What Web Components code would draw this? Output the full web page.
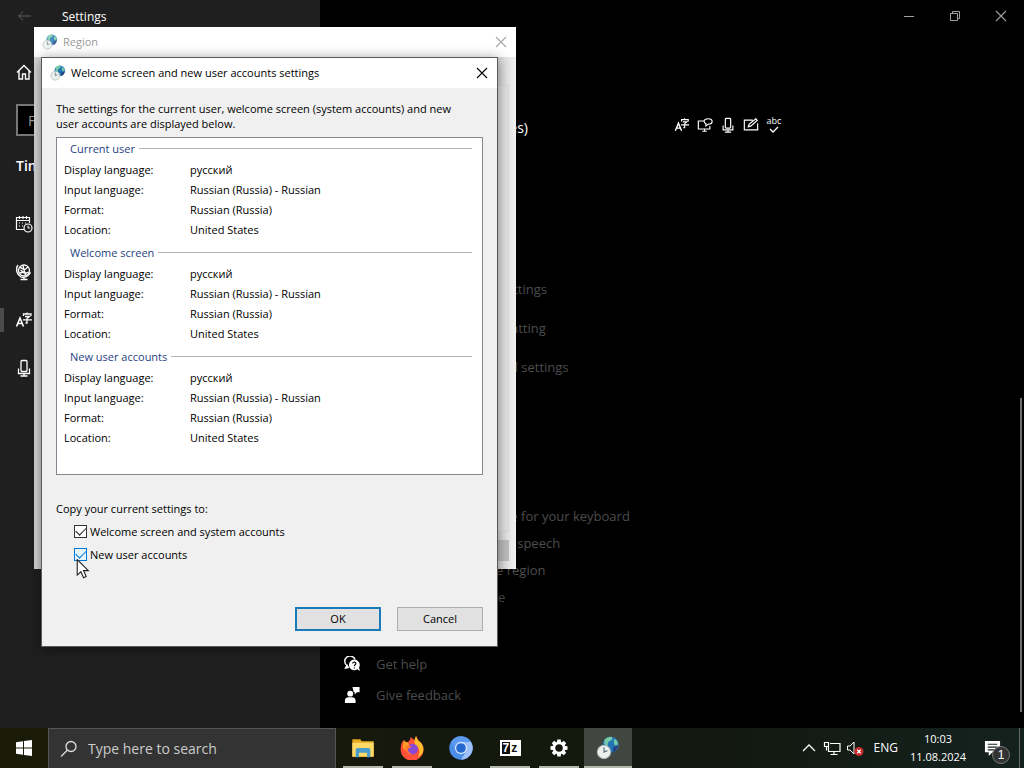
<!DOCTYPE html>
<html lang="en">
<head>
<meta charset="utf-8">
<title>Settings</title>
<style>
html, body { margin: 0; height: 100%; background: #000; overflow: hidden; }
body { font-family: "Open Sans", "Noto Sans", sans-serif; }
</style>
</head>
<body>
<desk-top></desk-top>
<script>
const define = (name, html) => {
  const t = document.createElement('template');
  t.innerHTML = '<style>*{box-sizing:border-box}svg{display:block}</style>' + html;
  customElements.define(name, class extends HTMLElement {
    constructor() {
      super();
      this.attachShadow({ mode: 'open' }).append(t.content.cloneNode(true));
    }
  });
};

const ICONS = {
  back: '<path d="M17 9H3M8 4 3 9l5 5"/>',
  home: '<path d="M2 9.500 9 2.500l7 7M4 8v8h3.500v-5h3v5H14V8" stroke-width="1.400"/>',
  date: '<path d="M9 14.500H1.500v-12h13V8M1.500 5.500h13M4.500 1v3M8 1v3M11.500 1v3M4 8h1M7 8h1M10 8h1M4 11h1M7 11h1" stroke-width="1.200"/><circle cx="13" cy="13" r="4" stroke-width="1.200"/><path d="M13 10.500V13h2"/>',
  region: '<g stroke-width="1.300"><circle cx="9" cy="7.500" r="5.500"/><path d="M4.500 4.500c3 0 3 2 5 2s2-3 4-2M4.500 10.500c2-3 5 1.500 9-1.500M8 2.500l2.500 10M5.500 7l6 4M3 2C0 6 2 12 6 13.800c4 1.500 8-.8 9.500-4.500M9 14v2.500M5.500 16.500h7"/></g>',
  language: '<path d="M1.500 15.500 5 7l3.500 8.500M2.800 12.500h4.400" stroke-width="1.600"/><path d="M12 1.500v1.500M8.500 5V3h7.500v2M10 5.500h4.500L12 7.500V12h-1.500M8 8.800h9" stroke-width="1.300"/>',
  mic: '<g stroke-width="1.300"><rect x="6" y="1.500" width="6" height="11" rx="1"/><path d="M3.500 9.500V14.500h11V9.500M9 14.500V17M5.500 17h7"/></g>',
  display: '<g stroke-width="1.300"><path d="M8 4.500H1.500v9h13V10M6 16h5M8.500 13.500V16"/><path d="M8 4.800C8 3 10 2 12.500 2S17 3 17 5s-2 3-4 3l-3 2V7.500C8.500 7 8 6 8 4.800Z"/></g>',
  pen: '<path d="M11 3.500H1.500v11h15V7M6 11l1-3 7.500-6 1.500 1.800L9 10Z" stroke-width="1.300"/>',
  help: '<path d="M3.500 11A6 6 0 1 1 12.500 4" stroke-width="1.600"/><path d="M3.500 9.500 1 14l5-1" fill="currentColor"/><path d="M11.500 4a6 6 0 1 0 3.400 11l3 2-1-4A6 6 0 0 0 11.500 4Z" fill="currentColor" stroke="none"/><path d="M9.800 8.500c0-2.500 3.800-2 3.500.2-.2 1.300-1.700 1.200-1.700 2.800M11.600 13v1" stroke="#000" stroke-width="1.300"/>',
  feedback: '<circle cx="7" cy="7.500" r="3.300" fill="currentColor" stroke="none"/><path d="M1 18v-2.500Q1 11.500 5 11.500h4q4 0 4 4V18ZM9.500 0h8v6h-3l-2.500 2.300V6H11Z" fill="currentColor" stroke="none"/>',
  close: '<path d="m4 4 10 10M14 4 4 14" stroke-width="1.100"/>',
  min: '<path d="M4 9.500h10"/>',
  restore: '<path d="M4.500 6.500h7v7h-7zM6.500 6.500v-2h7v7h-2"/>',
  search: '<circle cx="11" cy="6.500" r="5" stroke-width="1.300"/><path d="m7.500 10-6.500 6.500" stroke-width="1.300"/>',
  chevron: '<path d="m3 12 6-6 6 6" stroke-width="1.300"/>',
  network: '<path d="M7 4.500h10v8H5.500V8M11 12.500v3M7.500 15.500h7M1.500 3.500h4v4h-4zM3.500 7.500v4" stroke-width="1.200"/>',
  sound: '<path d="M1.500 7h2.500l4-4v12l-4-4H1.500Z"/><circle cx="13" cy="12.500" r="4.500" fill="#c42b2b" stroke="none"/><path d="m11.300 10.800 3.400 3.400m0-3.400-3.400 3.400" stroke-width="1.300"/>',
  start: '<path fill="currentColor" stroke="none" d="M1 3.200 8 2.200V8.500H1ZM9 2.100 17 1v7.500H9ZM1 9.500h7v6.300l-7-1ZM9 9.500h8V17l-8-1.100Z"/>',
  globe: '<circle cx="11" cy="6.500" r="6" fill="#2376b5" stroke="none"/><path d="M6.500 2.500Q9 0 12 .800q1 2-1.500 3T9 8Q5 7 6.500 2.500M14 2q3 2 2.700 5.500Q14 8 13.500 5.500T14 2" fill="#75c9a8" stroke="none"/><path d="M13 8.500q3-1 3.500-3 0 5-4 7Z" fill="#233f82" stroke="none"/><circle cx="6" cy="12" r="5" fill="#edf1ed" stroke="#a9b5b5" stroke-width=".8"/><path d="M6 8.500V12l2.500-1" stroke="#5c7280" stroke-width=".9"/>',
  files: '<path d="M1 2.500h6l1 1.500h9v11.500H1Z" fill="#e9a91d" stroke="none"/><path d="M1 5h16v10.500H1Z" fill="#ffd968" stroke="none"/><path d="M3.500 16V10.500Q3.500 9 5 9h8q1.500 0 1.500 1.500V16H12v-3.500H6V16Z" fill="#4a9ccc" stroke="none"/>',
  firefox: '<path d="M3 3Q3.800 5 5.500 4.500 7.500 4 8 1q2 1 3 2.500L12 0q1 3 3 4.500Q18 7 17.500 11A8.500 8 0 0 1 .5 10Q.5 5 3 3Z" fill="#ff503a" stroke="none"/><path d="M12 0q1 3 3 4.500Q18 7 17.500 11c-.5 3-3 4-4 5 2-4 1-8-2-9Q10 4 12 0Z" fill="#ffbd2e" stroke="none"/><path d="M3 3Q3.500 5 5.500 4.500L7 7q-3 1-3 4Q1 9 3 3Z" fill="#ff9c28" stroke="none"/><circle cx="9.500" cy="9.800" r="4" fill="#8b49d6" stroke="none"/><path d="M4 8q3-2 5 .5-3 0-3 2 0 2 3 3-5 1-5-5.500" fill="#ff7a2a" stroke="none"/>',
  chromium: '<circle cx="9" cy="9" r="8.800" fill="#4b8ee8" stroke="none"/><path d="M9 4.500h7.500A8.800 8.800 0 0 1 9 17.800l4-6.500Z" fill="#9dc1f8" stroke="none"/><path d="M1.500 4.400A8.800 8.800 0 0 1 16.500 4.500H9a4.500 4.500 0 0 0-4.200 6Z" fill="#5a9af0" stroke="none"/><circle cx="9" cy="9" r="4.600" fill="#d6e6ff" stroke="none"/><circle cx="9" cy="9" r="3.600" fill="#2469cf" stroke="none"/>',
  gear: '<g stroke="none" fill="currentColor"><path d="M7.300.5h3.400l.5 3.500H6.800ZM6.800 14h4.400l-.5 3.500H7.300Z"/><path transform="rotate(45 9 9)" d="M7.300.5h3.400l.5 3.500H6.800ZM6.800 14h4.400l-.5 3.500H7.300Z"/><path transform="rotate(90 9 9)" d="M7.300.5h3.400l.5 3.500H6.800ZM6.800 14h4.400l-.5 3.500H7.300Z"/><path transform="rotate(135 9 9)" d="M7.300.5h3.400l.5 3.500H6.800ZM6.800 14h4.400l-.5 3.500H7.300Z"/></g><circle cx="9" cy="9" r="5" stroke-width="2.400"/>',
  note: '<path d="M1 1h16v12H9l-4 4v-4H1Z" fill="currentColor" stroke="none"/><path d="M4 4.500h10M4 7.500h10M4 10.500h7" stroke="#16201f" stroke-width="1.200"/>',
  cursor: '<path d="M2 .500v14l3.300-3 2.400 5.300 2.400-1.100-2.400-5.200H12Z" fill="#fff" stroke="#222"/>'
};

customElements.define('ui-icon', class extends HTMLElement {
  constructor() {
    super();
    this.attachShadow({ mode: 'open' });
  }
  connectedCallback() {
    this.shadowRoot.innerHTML = `<style>:host{display:block;flex:none;width:var(--size,18px);height:var(--size,18px)}svg{display:block;width:100%;height:100%}</style>
      <svg viewBox="0 0 18 18" fill="none" stroke="currentColor" aria-hidden="true">${ICONS[this.getAttribute('name')]}</svg>`;
  }
});

define('nav-rail', `
<style>
:host { display: block; background: #1f1f1f; color: #fff; padding-top: 32px; }
a { display: flex; align-items: center; height: 48px; padding-left: 15px; color: #fff; }
a.current { position: relative; }
a.current::before { content: ""; position: absolute; left: 0; top: 12px; width: 4px; height: 24px; background: #4c4c4c; }
.home { height: 40px; margin-top: 20px; }
.find { display: block; width: calc(100% - 32px); height: 32px; margin: 12px 16px 0; padding: 0 10px; background: #000; border: 2px solid #777; color: #aaa; font: 14px "Open Sans", sans-serif; }
.find::placeholder { color: #999; opacity: 1; }
h2 { margin: 20px 16px 24px; font-size: 14px; line-height: 20px; font-weight: 600; }
</style>
<a class="home" href="#home" aria-label="Home"><ui-icon name="home"></ui-icon></a>
<input class="find" type="text" placeholder="Find" aria-label="Find a setting">
<h2>Time</h2>
<nav>
<a href="#date" aria-label="Date and time"><ui-icon name="date"></ui-icon></a>
<a href="#region" aria-label="Region"><ui-icon name="region"></ui-icon></a>
<a class="current" href="#language" aria-label="Language"><ui-icon name="language"></ui-icon></a>
<a href="#speech" aria-label="Speech"><ui-icon name="mic"></ui-icon></a>
</nav>`);

define('language-page', `
<style>
:host { display: block; padding: 108px 24px 0; color: #fff; }
.lang { display: flex; align-items: center; gap: 146px; height: 40px; padding-left: 32px; }
.lang span { width: 152px; text-align: right; font-size: 14px; line-height: 20px; }
.feat { display: flex; gap: 7px; --size: 16px; margin-bottom: 6px; }
.abc { width: 16px; font-size: 9px; line-height: 8px; display: grid; justify-items: center; }
.abc svg { width: 10px; height: 7px; }
a { display: block; width: max-content; color: #4c4c4c; text-decoration: none; font-size: 13px; line-height: 20px; }
.related { display: grid; gap: 19px; margin-top: 131px; padding-left: 6px; }
.web { display: grid; gap: 7px; margin-top: 129px; }
.foot { display: grid; gap: 11px; margin-top: 47px; }
.foot a { display: flex; align-items: center; gap: 16px; }
.foot ui-icon { --size: 16px; color: #fff; }
.bar { position: absolute; right: 2px; top: 398px; bottom: 16px; width: 2px; background: #6f6f6f; }
</style>
<div class="lang"><span>States)</span>
<div class="feat"><ui-icon name="language"></ui-icon><ui-icon name="display"></ui-icon><ui-icon name="mic"></ui-icon><ui-icon name="pen"></ui-icon>
<div class="abc">abc<svg viewBox="0 0 10 7" fill="none" stroke="currentColor" stroke-width="1.300"><path d="m1 3 3 3 5-5"/></svg></div></div></div>
<div class="related">
<a href="#admin">Administrative language settings</a>
<a href="#format">Date, time &amp; regional formatting</a>
<a href="#typing">Spelling, typing, &amp; keyboard settings</a>
</div>
<div class="web">
<a href="#w1">Changing the input language for your keyboard</a>
<a href="#w2">Downloading a language for speech</a>
<a href="#w3">Changing language for the region</a>
<a href="#w4">Adding an offline language</a>
</div>
<div class="foot">
<a href="#help"><ui-icon name="help"></ui-icon>Get help</a>
<a href="#feedback"><ui-icon name="feedback"></ui-icon>Give feedback</a>
</div>
<div class="bar"></div>`);

define('settings-window', `
<style>
:host { display: grid; grid-template-columns: 320px 1fr; position: relative; min-height: 0; overflow: hidden; }
header { position: absolute; inset: 0 0 auto 0; display: flex; align-items: center; height: 32px; color: #fff; font-size: 12px; }
button { display: grid; place-items: center; height: 32px; padding: 0; border: 0; background: none; color: #a0a0a0; --size: 18px; }
.back { width: 48px; color: #666; --size: 16px; }
h1 { flex: 1; margin: 0 0 0 14px; padding-top: 2px; font-size: 12px; font-weight: 400; line-height: 18px; }
.ctl { width: 46px; }
</style>
<nav-rail></nav-rail>
<language-page></language-page>
<header>
<button class="back" aria-label="Back"><ui-icon name="back"></ui-icon></button>
<h1>Settings</h1>
<button class="ctl" aria-label="Minimize"><ui-icon name="min"></ui-icon></button>
<button class="ctl" aria-label="Restore"><ui-icon name="restore"></ui-icon></button>
<button class="ctl" aria-label="Close"><ui-icon name="close"></ui-icon></button>
</header>`);

define('dialog-window', `
<style>
:host { display: flex; flex-direction: column; background: #f0f0f0; color: #000; font-size: 11px; line-height: 15px; }
header { display: flex; align-items: center; flex: none; height: 30px; padding-left: 8px; background: #fff; color: var(--title, #000); --size: 16px; }
header ui-icon { opacity: var(--dim, 1); }
h1 { flex: 1; margin: 0 0 0 5px; font-size: 11px; line-height: 16px; font-weight: 400; }
button { display: grid; place-items: center; width: 30px; height: 30px; padding: 0; border: 0; background: none; color: inherit; --size: 18px; }
</style>
<header><ui-icon name="globe"></ui-icon><h1><slot name="title"></slot></h1>
<button aria-label="Close"><ui-icon name="close"></ui-icon></button></header>
<slot></slot>`);

define('settings-group', `
<style>
:host { display: block; }
h2 { display: flex; align-items: center; gap: 4px; height: 21px; margin: 0; padding: 0 3px 0 6px; color: #1f3f82; font-size: 11px; font-weight: 400; }
h2::after { content: ""; flex: 1; height: 1px; background: #b4b4b4; }
dl { display: grid; grid-template-columns: 126px 1fr; grid-auto-rows: 20px; align-items: center; margin: 0; }
dt, dd { margin: 0; }
</style>
<h2><slot></slot></h2>
<dl><dt>Display language:</dt><dd>русский</dd>
<dt>Input language:</dt><dd>Russian (Russia) - Russian</dd>
<dt>Format:</dt><dd>Russian (Russia)</dd>
<dt>Location:</dt><dd>United States</dd></dl>`);

define('welcome-settings', `
<style>
:host { display: flex; flex-direction: column; flex: 1; padding: 13px 14px 15px; }
p { margin: 0; padding-right: 16px; }
.box { display: flex; flex-direction: column; gap: 3px; height: 338px; margin-top: 6px; padding: 0 7px; background: #fff; border: 1px solid #828790; }
.copy { margin-top: 26px; }
label { display: flex; align-items: center; gap: 3px; height: 23px; padding-left: 18px; }
.first { margin-top: 4px; }
input { appearance: none; display: grid; place-items: center; width: 13px; height: 13px; margin: 0; background: #fff; border: 1px solid #333; color: #222; }
input::before { content: ""; width: 9px; height: 5px; border: solid currentColor; border-width: 0 0 1px 1px; transform: translateY(-2px) rotate(-45deg); }
input.hot { border-color: #0078d7; color: #0078d7; background: #e8f4fd; }
footer { display: flex; justify-content: flex-end; gap: 16px; margin-top: auto; }
button { width: 86px; height: 24px; padding: 0 0 2px; border: 1px solid #adadad; background: #e1e1e1; color: #000; font: 11px "Open Sans", sans-serif; }
.ok { border: 2px solid #1979b9; }
</style>
<p>The settings for the current user, welcome screen (system accounts) and new user accounts are displayed below.</p>
<div class="box">
<settings-group>Current user</settings-group>
<settings-group>Welcome screen</settings-group>
<settings-group>New user accounts</settings-group>
</div>
<p class="copy">Copy your current settings to:</p>
<label class="first"><input type="checkbox" checked>Welcome screen and system accounts</label>
<label><input class="hot" type="checkbox" checked>New user accounts</label>
<footer><button class="ok">OK</button><button>Cancel</button></footer>`);

define('region-body', `
<style>
:host { display: flex; flex-direction: column; flex: 1; padding: 28px 7px 8px; background: linear-gradient(90deg, #d6d6d6 96%, #f0f0f0); }
.sheet { flex: 1; border: 1px solid #d9d9d9; background: #e2e2e2; }
.apply { width: 75px; height: 21px; margin: 8px 0 0 auto; background: #bdbdbd; }
</style>
<div class="sheet"></div><div class="apply"></div>`);

define('task-bar', `
<style>
:host { display: flex; height: 40px; color: #fff; background: linear-gradient(90deg, #1a1b08, #15180c 40%, #12180f 70%, #14221f); }
button { position: relative; display: grid; place-items: center; flex: none; width: 48px; height: 40px; padding: 0; border: 0; background: none; color: #fff; --size: 24px; }
.start { --size: 18px; }
.search { display: flex; align-items: center; gap: 10px; flex: 0 1 288px; padding-left: 11px; background: #333; border: 1px solid #555; border-bottom: 0; color: #ddd; margin-right: 3px; }
.search input { flex: 1; min-width: 0; padding: 0; border: 0; background: none; font: 14px "Open Sans", sans-serif; color: #ccc; }
.search input::placeholder { color: #ccc; opacity: 1; }
.apps { display: flex; gap: 1px; flex: 1; }
.run::after { content: ""; position: absolute; left: 4px; right: 4px; bottom: 0; height: 2px; background: #b5b7ad; }
.on { background: #414641; }
.on::after { left: 0; right: 0; }
.gear { --size: 18px; }
.seven { display: flex; width: 21px; height: 16px; background: #fff; border: 2px solid #fff; color: #fff; font: bold 12px/12px "Liberation Sans", sans-serif; }
.seven b { flex: 1; background: #111; }
.seven i { flex: 1; font-style: normal; color: #111; }
.tray { display: flex; align-items: center; font-size: 12px; line-height: 18px; --size: 18px; }
.tray ui-icon { margin-right: 5px; }
.lang { margin-left: 5px; }
.time { width: 74px; margin-left: 3px; text-align: center; font-size: 11px; }
.note { width: 34px; --size: 17px; }
.note ui-icon { margin: 0; }
.badge { position: absolute; left: 17px; top: 18px; width: 18px; height: 18px; border: 1px solid #777; border-radius: 50%; background: #333; font-size: 12px; line-height: 16px; }
.peek { width: 5px; height: 40px; margin-left: 10px; border-left: 1px solid #666; }
</style>
<button class="start" aria-label="Start"><ui-icon name="start"></ui-icon></button>
<label class="search"><ui-icon name="search"></ui-icon><input type="text" placeholder="Type here to search" aria-label="Type here to search"></label>
<div class="apps">
<button class="run" aria-label="File Explorer"><ui-icon name="files"></ui-icon></button>
<button class="run" aria-label="Firefox"><ui-icon name="firefox"></ui-icon></button>
<button aria-label="Chromium"><ui-icon name="chromium"></ui-icon></button>
<button class="run" aria-label="7-Zip"><span class="seven"><b>7</b><i>z</i></span></button>
<button class="run gear" aria-label="Settings"><ui-icon name="gear"></ui-icon></button>
<button class="run on" aria-label="Region"><ui-icon name="globe"></ui-icon></button>
</div>
<div class="tray">
<ui-icon name="chevron"></ui-icon><ui-icon name="network"></ui-icon><ui-icon name="sound"></ui-icon>
<span class="lang">ENG</span><div class="time">10:03<br>11.08.2024</div>
<button class="note" aria-label="Notifications"><ui-icon name="note"></ui-icon><span class="badge">1</span></button>
<div class="peek"></div>
</div>`);

define('desk-top', `
<style>
:host { display: grid; grid-template-rows: 1fr auto; height: 100vh; min-height: 0; position: relative; }
dialog-window { position: absolute; }
.region { left: 34px; top: 27px; width: 482px; height: 542px; --title: #999; --dim: .85; }
.welcome { left: 41px; top: 57px; width: 457px; height: 590px; border: 1px solid #5a5a5a; box-shadow: 0 2px 12px rgba(0,0,0,.45); }
.cursor { position: absolute; left: 75px; top: 559px; --size: 20px; }
</style>
<settings-window></settings-window>
<task-bar></task-bar>
<dialog-window class="region"><span slot="title">Region</span><region-body></region-body></dialog-window>
<dialog-window class="welcome"><span slot="title">Welcome screen and new user accounts settings</span><welcome-settings></welcome-settings></dialog-window>
<ui-icon class="cursor" name="cursor"></ui-icon>`);
</script>
</body>
</html>
